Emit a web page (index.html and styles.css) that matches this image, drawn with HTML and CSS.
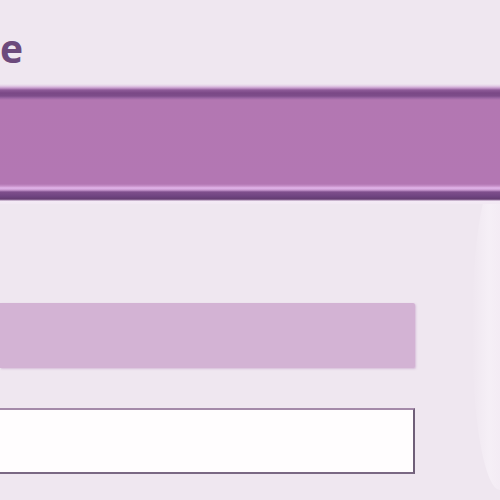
FILE: index.html
```html
<!DOCTYPE html>
<html>
<head>
<meta charset="utf-8">
<link rel="stylesheet" href="styles.css">
</head>
<body>
<div class="page">
  <div class="glow"></div>
  <h1 class="title">e</h1>
  <div class="banner"></div>
  <div class="form">
    <div class="field-filled"></div>
    <div class="field-input"></div>
  </div>
</div>
</body>
</html>
```
FILE: styles.css
```css
html, body {
  margin: 0;
  padding: 0;
  width: 500px;
  height: 500px;
  overflow: hidden;
  background: #efe7f0;
}
.page {
  position: relative;
  width: 500px;
  height: 500px;
  overflow: hidden;
  display: flex;
  flex-direction: column;
  font-family: "Open Sans", "DejaVu Sans", sans-serif;
}
.glow {
  position: absolute;
  right: 0;
  top: 170px;
  width: 28px;
  height: 320px;
  border-radius: 100% 0 0 100% / 50% 0 0 50%;
  background: linear-gradient(to right, rgba(239,231,240,0) 0%, rgba(247,241,248,0.8) 60%, rgba(246,239,247,0.6) 100%);
}
.title {
  margin: 0;
  height: 84px;
  padding-top: 28px;
  box-sizing: border-box;
  font-size: 39px;
  line-height: 1;
  font-weight: 700;
  color: #6c4a7c;
}
.banner {
  position: relative;
  height: 120px;
  background: linear-gradient(to bottom,
    #efe7f0 0px,
    #e3cde6 2px,
    #c59acb 4px,
    #8e5b98 6px,
    #7a4886 9px,
    #7d4d8a 12px,
    #9a65a3 14px,
    #b377b2 16px,
    #b377b3 100px,
    #c68fc8 102px,
    #e2b6ea 104px,
    #c898cf 106px,
    #7e4e8c 108px,
    #704582 112px,
    #643c72 115px,
    #9b7ba3 116px,
    #f4eaf6 117px,
    #f2e9f3 120px);
}
.form {
  display: flex;
  flex-direction: column;
  gap: 40px;
  padding-top: 99px;
}
.field-filled {
  width: 415px;
  height: 65px;
  background: #d3b3d4;
  border-radius: 0 2px 2px 0;
  box-shadow: 1px 1px 2px rgba(190,150,195,0.5);
}
.field-input {
  width: 413px;
  height: 62px;
  background: #fffdfe;
  border-top: 2px solid #a48aa9;
  border-right: 2px solid #6f5f78;
  border-bottom: 2px solid #7a6883;
  box-sizing: content-box;
}
```
